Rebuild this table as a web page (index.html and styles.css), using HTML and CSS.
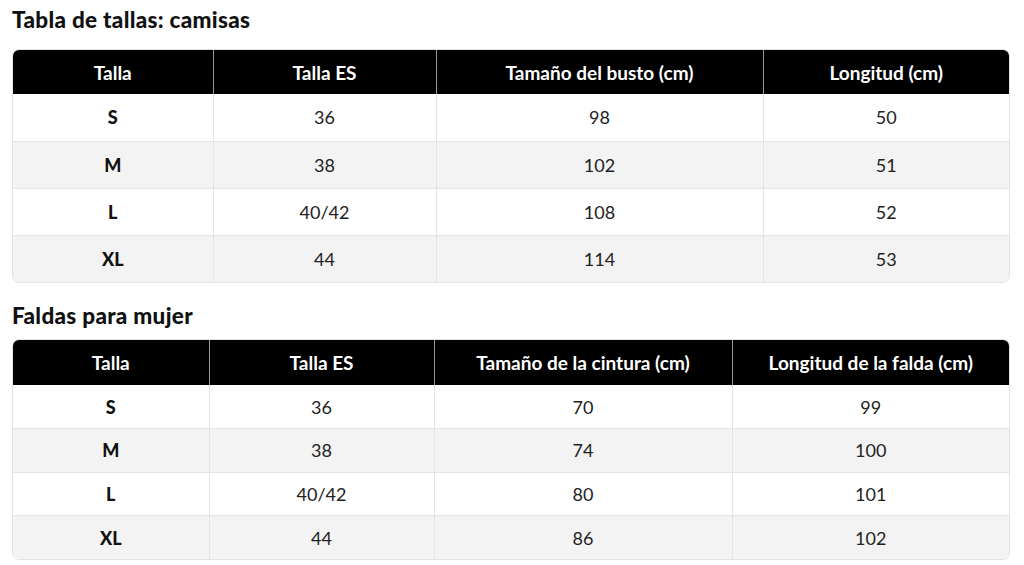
FILE: index.html
```html
<!DOCTYPE html>
<html lang="es">
<head>
<meta charset="utf-8">
<link rel="stylesheet" href="styles.css">
</head>
<body>
<main class="page">
  <h2 class="title first">Tabla de tallas: camisas</h2>
  <div class="card">
    <table class="grid shirts">
      <colgroup><col style="width:200px"><col style="width:223px"><col style="width:327px"><col></colgroup>
      <thead><tr><th>Talla</th><th>Talla ES</th><th>Tamaño del busto (cm)</th><th>Longitud (cm)</th></tr></thead>
      <tbody>
        <tr><td class="size">S</td><td>36</td><td>98</td><td>50</td></tr>
        <tr><td class="size">M</td><td>38</td><td>102</td><td>51</td></tr>
        <tr><td class="size">L</td><td>40/42</td><td>108</td><td>52</td></tr>
        <tr><td class="size">XL</td><td>44</td><td>114</td><td>53</td></tr>
      </tbody>
    </table>
  </div>
  <h2 class="title second">Faldas para mujer</h2>
  <div class="card">
    <table class="grid skirts">
      <colgroup><col style="width:196px"><col style="width:225px"><col style="width:298px"><col></colgroup>
      <thead><tr><th>Talla</th><th>Talla ES</th><th>Tamaño de la cintura (cm)</th><th>Longitud de la falda (cm)</th></tr></thead>
      <tbody>
        <tr><td class="size">S</td><td>36</td><td>70</td><td>99</td></tr>
        <tr><td class="size">M</td><td>38</td><td>74</td><td>100</td></tr>
        <tr><td class="size">L</td><td>40/42</td><td>80</td><td>101</td></tr>
        <tr><td class="size">XL</td><td>44</td><td>86</td><td>102</td></tr>
      </tbody>
    </table>
  </div>
</main>
</body>
</html>
```

FILE: styles.css
```css
* { box-sizing: border-box; }
html, body { margin: 0; padding: 0; background: #fff; }
body { font-family: Lato, "Noto Sans", sans-serif; color: #111; }
.page { padding: 0 14px 0 12px; display: flex; flex-direction: column; }
.title { font-size: 22.5px; line-height: 26px; font-weight: 900; margin: 0; color: #111; letter-spacing: 0.3px; }
.title.first { margin-top: 7px; margin-bottom: 16px; }
.title.second { margin-top: 20px; margin-bottom: 10px; }
.card { border: 1px solid #e2e2e2; border-radius: 7px; overflow: hidden; }
.grid { width: 100%; border-collapse: collapse; table-layout: fixed; }
.grid th { background: #000; color: #fff; font-weight: 700; font-size: 19px; height: 44px; padding: 0; text-align: center; border-left: 1px solid #9a9a9a; }
.grid td { font-size: 18px; font-weight: 400; color: #222; text-align: center; padding: 0; border-left: 1px solid #e4e4e4; border-top: 1px solid #e4e4e4; }
.grid th:first-child, .grid td:first-child { border-left: none; }
.grid tbody tr:first-child td { border-top: none; }
.grid tbody tr:nth-child(even) td { background: #f3f3f3; }
.grid td.size { font-weight: 900; color: #111; }
.shirts td { height: 47px; }
.skirts th { height: 45px; }
.skirts td { height: 43.5px; }
```
